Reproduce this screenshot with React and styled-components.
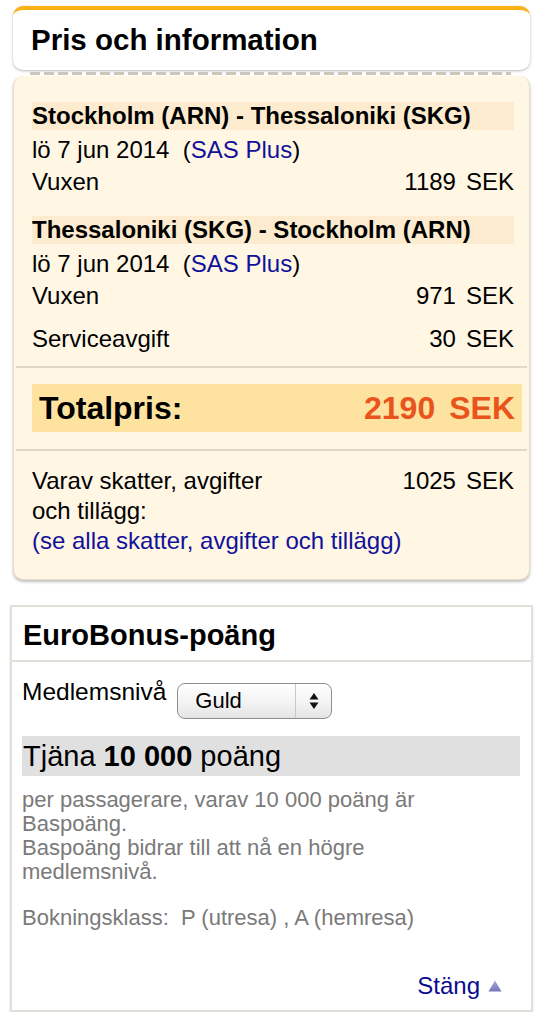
import React from 'react';
import styled, { createGlobalStyle } from 'styled-components';

const GlobalStyle = createGlobalStyle`
  body {
    margin: 0;
    background: #ffffff;
    font-family: "Liberation Sans", Arial, Helvetica, sans-serif;
    color: #000;
  }
`;

const legs = [
  { route: 'Stockholm (ARN) - Thessaloniki (SKG)', date: 'lö 7 jun 2014', fare: 'SAS Plus', price: 1189 },
  { route: 'Thessaloniki (SKG) - Stockholm (ARN)', date: 'lö 7 jun 2014', fare: 'SAS Plus', price: 971 },
];

const App = () => {
  return (
    <Page>
      <GlobalStyle />
      <PriceCard>
        <PriceHeader>Pris och information</PriceHeader>
        <Perforation />
        <PriceBody>
          <Section $top={26} $bottom={11}>
            {legs.map((leg, i) => (
              <Leg key={leg.route} $first={i === 0}>
                <RouteTitle>{leg.route}</RouteTitle>
                <Line $mt={4}>
                  {leg.date}&nbsp;&nbsp;(<Link>{leg.fare}</Link>)
                </Line>
                <PriceRow>
                  <span>Vuxen</span>
                  <Amount>
                    {leg.price}<Currency>SEK</Currency>
                  </Amount>
                </PriceRow>
              </Leg>
            ))}
            <PriceRow $mt={11}>
              <span>Serviceavgift</span>
              <Amount>
                30<Currency>SEK</Currency>
              </Amount>
            </PriceRow>
          </Section>
          <Divider />
          <Section $top={16} $bottom={17}>
            <TotalBox>
              <span>Totalpris:</span>
              <TotalAmount>
                2190<Currency $wide>SEK</Currency>
              </TotalAmount>
            </TotalBox>
          </Section>
          <Divider />
          <Section $top={15} $bottom={23}>
            <TaxRow>
              <span>
                Varav skatter, avgifter
                <br />
                och tillägg:
              </span>
              <Amount>
                1025<Currency>SEK</Currency>
              </Amount>
            </TaxRow>
            <TaxLink>(se alla skatter, avgifter och tillägg)</TaxLink>
          </Section>
        </PriceBody>
      </PriceCard>

      <BonusCard>
        <BonusHeader>EuroBonus-poäng</BonusHeader>
        <BonusBody>
          <LevelRow>
            <LevelLabel>Medlemsnivå</LevelLabel>
            <SelectBox>
              <SelectValue>Guld</SelectValue>
              <SelectArrows>
                <svg width="10" height="20" viewBox="0 0 10 20">
                  <polygon points="5,2 9.5,8.5 0.5,8.5" fill="#111" />
                  <polygon points="0.5,11.5 9.5,11.5 5,18" fill="#111" />
                </svg>
              </SelectArrows>
            </SelectBox>
          </LevelRow>
          <EarnBar>
            Tjäna <strong>10 000</strong> poäng
          </EarnBar>
          <Note>
            per passagerare, varav 10 000 poäng är
            <br />
            Baspoäng.
            <br />
            Baspoäng bidrar till att nå en högre
            <br />
            medlemsnivå.
          </Note>
          <Note $mt={22}>Bokningsklass:&nbsp; P (utresa) , A (hemresa)</Note>
          <CloseRow>
            <CloseLink>Stäng</CloseLink>
            <svg width="14" height="12" viewBox="0 0 14 12">
              <defs>
                <linearGradient id="tri" x1="0" y1="0" x2="0" y2="1">
                  <stop offset="0" stopColor="#a9a9dc" />
                  <stop offset="1" stopColor="#7474b8" />
                </linearGradient>
              </defs>
              <polygon points="7,0.5 13.5,11.5 0.5,11.5" fill="url(#tri)" />
            </svg>
          </CloseRow>
        </BonusBody>
      </BonusCard>
    </Page>
  );
};

export default App;

// --- styles ---
const Page = styled.div`
  width: 538px;
  padding-top: 6px;
  display: flex;
  flex-direction: column;
`;

const PriceCard = styled.div`
  margin: 0 8px 0 13px;
  display: flex;
  flex-direction: column;
`;

const PriceHeader = styled.h2`
  margin: 0;
  height: 60px;
  display: flex;
  align-items: center;
  padding-left: 18px;
  background: #ffffff;
  border-top: 4px solid #fbb117;
  border-radius: 10px;
  box-shadow: 0 1px 3px rgba(0, 0, 0, 0.28);
  font-size: 29.5px;
  font-weight: 700;
`;

const Perforation = styled.div`
  height: 3px;
  margin: 2px 19px 0 17px;
  background: repeating-linear-gradient(90deg, #cdc6b8 0 10px, transparent 10px 14px);
`;

const PriceBody = styled.div`
  margin-top: 1px;
  background: #fff6e4;
  border: 1px solid #e6dcc9;
  border-top: none;
  border-radius: 10px;
  box-shadow: 0 2px 3px rgba(0, 0, 0, 0.25);
  font-size: 24px;
`;

const Section = styled.div`
  padding: ${(p) => p.$top}px 15px ${(p) => p.$bottom}px 18px;
  display: flex;
  flex-direction: column;
`;

const Leg = styled.div`
  display: flex;
  flex-direction: column;
  margin-top: ${(p) => (p.$first ? 0 : 18)}px;
`;

const RouteTitle = styled.div`
  height: 28px;
  line-height: 28px;
  background: #fdebcf;
  font-weight: 700;
  white-space: nowrap;
`;

const Line = styled.div`
  line-height: 32px;
  margin-top: ${(p) => p.$mt || 0}px;
`;

const PriceRow = styled.div`
  display: flex;
  justify-content: space-between;
  line-height: 32px;
  margin-top: ${(p) => p.$mt || 0}px;
`;

const Amount = styled.span`
  white-space: nowrap;
`;

const Currency = styled.span`
  margin-left: ${(p) => (p.$wide ? 14 : 10)}px;
`;

const Link = styled.span`
  color: #11119a;
`;

const Divider = styled.div`
  height: 2px;
  margin: 0 2px;
  background: #e0d8c8;
`;

const TotalBox = styled.div`
  height: 48px;
  margin-right: -8px;
  padding: 0 7px 0 7px;
  display: flex;
  align-items: center;
  justify-content: space-between;
  background: #fee2a0;
  font-size: 32px;
  font-weight: 700;
`;

const TotalAmount = styled.span`
  color: #e9531c;
  white-space: nowrap;
`;

const TaxRow = styled.div`
  display: flex;
  justify-content: space-between;
  align-items: flex-start;
  line-height: 30px;
`;

const TaxLink = styled.div`
  color: #11119a;
  line-height: 30px;
`;

const BonusCard = styled.div`
  margin: 25px 5px 0 10px;
  border: 2px solid #e3e0d9;
  box-shadow: 0 2px 2px rgba(0, 0, 0, 0.15);
  background: #ffffff;
`;

const BonusHeader = styled.h2`
  margin: 0;
  height: 55px;
  padding: 4px 0 0 11px;
  box-sizing: border-box;
  display: flex;
  align-items: center;
  border-bottom: 2px solid #e3e0d9;
  font-size: 29px;
  font-weight: 700;
`;

const BonusBody = styled.div`
  padding: 18px 11px 12px 10px;
  display: flex;
  flex-direction: column;
`;

const LevelRow = styled.div`
  display: flex;
  align-items: flex-start;
  gap: 11px;
`;

const LevelLabel = styled.span`
  font-size: 24.5px;
  line-height: 24px;
`;

const SelectBox = styled.div`
  margin-top: 3px;
  width: 155px;
  height: 36px;
  box-sizing: border-box;
  display: flex;
  border: 1.5px solid #8e8e8e;
  border-radius: 8px;
  background: linear-gradient(#ffffff, #f3f3f3 55%, #e4e4e4);
  box-shadow: inset 0 1px 1px rgba(255, 255, 255, 0.9);
`;

const SelectValue = styled.span`
  flex: 1;
  padding-left: 17px;
  font-size: 22px;
  line-height: 33px;
  border-right: 1px solid #c8c8c8;
`;

const SelectArrows = styled.span`
  width: 35px;
  display: flex;
  align-items: center;
  justify-content: center;
`;

const EarnBar = styled.div`
  margin-top: 17px;
  height: 40px;
  line-height: 40px;
  padding-left: 1px;
  background: #e0e0e0;
  font-size: 29px;
  white-space: nowrap;
`;

const Note = styled.div`
  margin-top: ${(p) => (p.$mt !== undefined ? p.$mt : 12)}px;
  color: #7a7a7a;
  font-size: 22px;
  line-height: 24px;
`;

const CloseRow = styled.div`
  margin-top: 44px;
  margin-right: 18px;
  display: flex;
  justify-content: flex-end;
  align-items: center;
  gap: 8px;
  line-height: 24px;
`;

const CloseLink = styled.span`
  color: #0b0b8e;
  font-size: 24px;
`;
